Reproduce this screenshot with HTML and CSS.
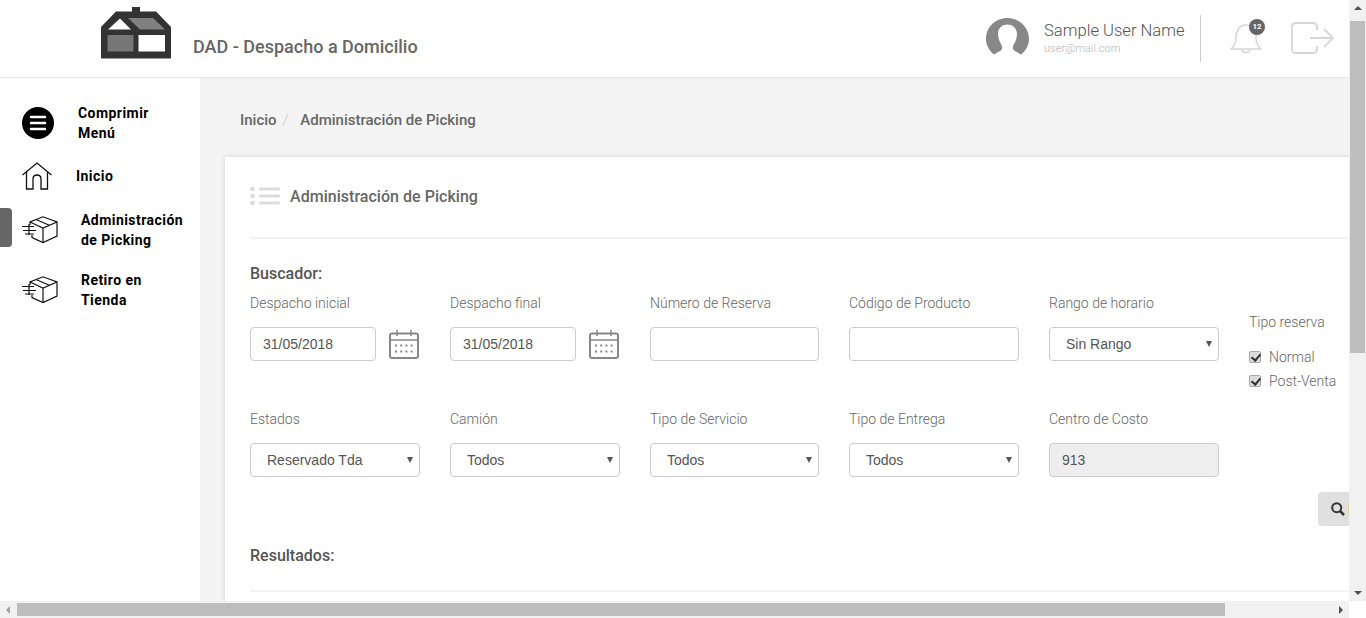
FILE: index.html
```html
<!DOCTYPE html>
<html lang="es">
<head>
    <meta charset="UTF-8">
    <meta name="viewport" content="width=device-width, initial-scale=1.0">
    <title>DAD - Despacho a Domicilio</title>
    <link rel="stylesheet" href="styles.css">
</head>
<body>
    <div class="window">
        <div class="viewport">
            <header class="topbar">
                <div class="brand">
                    <svg class="brand-logo" width="70" height="52" viewBox="0 0 70 52">
                        <path fill="#333" d="M0 20 15 4.500H31V0H39V4.500H55L70 20V51.500H0Z"/>
                        <path fill="#fff" d="M7 22.500 19 11.500 30 22.500Z"/>
                        <path fill="#808080" d="M27 11H52L64 22.500H39Z"/>
                        <rect fill="#777" x="6.500" y="28" width="26" height="16.500"/>
                        <rect fill="#fff" x="37.500" y="28" width="26.500" height="16.500"/>
                    </svg>
                    <span class="brand-name">DAD - Despacho a Domicilio</span>
                </div>
                <div class="user">
                    <svg class="avatar" width="43" height="38" viewBox="0 0 43 38">
                        <path fill="#888" d="M8 36.500C3 32.500 0 27 0 21 0 9 9.500 0 21.500 0S43 9.500 43 21C43 27 40 32.500 35 36.500 32 34.500 28 33 27 31 26.500 29 27 28 28 26 30 23 31 19 31 15 30 9.500 26.500 6.500 21.500 6.500S12.500 9.500 12 15C12 19 13 23 15 26 16 28 16.500 29 16 31 15 33 11 34.500 8 36.500Z"/>
                    </svg>
                    <div class="user-info">
                        <div class="user-name">Sample User Name</div>
                        <div class="user-mail">user@mail.com</div>
                    </div>
                    <div class="user-sep"></div>
                    <div class="bell">
                        <svg width="32" height="32" viewBox="0 0 32 32" fill="none" stroke="#d6d6d6" stroke-width="1.500">
                            <path d="M1 27C5 24 6 21 6 15 6 8 10 3 16 3S26 8 26 15C26 21 27 24 31 27Z" stroke-linejoin="round"/>
                            <path d="M11.500 27.500A4.800 4.800 0 0 0 20.500 27.500"/>
                        </svg>
                        <span class="badge">12</span>
                    </div>
                    <svg class="logout" width="43" height="32" viewBox="0 0 43 32" fill="none" stroke="#d6d6d6" stroke-width="1.800">
                        <path d="M26 8V5Q26 1 22 1H5Q1 1 1 5V27Q1 31 5 31H22Q26 31 26 27V24"/>
                        <path d="M19 16H42M33 7 42 16 33 25"/>
                    </svg>
                </div>
            </header>
            <div class="layout">
                <nav class="sidebar">
                    <a class="nav-item nav-toggle">
                        <svg class="nav-icon" width="32" height="32" viewBox="0 0 32 32">
                            <circle cx="16" cy="16" r="16" fill="#000"/>
                            <path stroke="#fff" stroke-width="2.500" stroke-linecap="round" d="M9 10H23M9 16H23M9 22H23"/>
                        </svg>
                        <span>Comprimir<br>Menú</span>
                    </a>
                    <a class="nav-item nav-home">
                        <svg class="nav-icon" width="30" height="28" viewBox="0 0 30 28" fill="none" stroke="#111" stroke-width="1.300">
                            <path d="M.5 13 15 1 29.500 13"/>
                            <path d="M4.500 10V27H11V17Q11 13 15 13T19 17V27H25.500V10"/>
                        </svg>
                        <span>Inicio</span>
                    </a>
                    <a class="nav-item nav-box active">
                        <svg class="nav-icon" width="36" height="28" viewBox="0 0 36 28" fill="none" stroke="#111" stroke-width="1.200">
                            <path d="M8 9V6L21 .8 35 6V20L21 26.500 10 21.500V19"/>
                            <path d="M8 6 21 12 35 6M21 12V26.500M14 3.500 28 9.500"/>
                            <path d="M0 10.500H12M1 14.500H14M3 18H12M7 8V19"/>
                        </svg>
                        <span>Administración<br>de Picking</span>
                    </a>
                    <a class="nav-item nav-box">
                        <svg class="nav-icon" width="36" height="28" viewBox="0 0 36 28" fill="none" stroke="#111" stroke-width="1.200">
                            <path d="M8 9V6L21 .8 35 6V20L21 26.500 10 21.500V19"/>
                            <path d="M8 6 21 12 35 6M21 12V26.500M14 3.500 28 9.500"/>
                            <path d="M0 10.500H12M1 14.500H14M3 18H12M7 8V19"/>
                        </svg>
                        <span>Retiro en<br>Tienda</span>
                    </a>
                </nav>
                <main class="content">
                    <div class="breadcrumb">
                        <span>Inicio</span><span class="crumb-sep">/</span><span>Administración de Picking</span>
                    </div>
                    <section class="card">
                        <div class="card-title">
                            <svg width="30" height="20" viewBox="0 0 30 20" fill="#dcdcdc">
                                <circle cx="2.500" cy="3" r="2.300"/>
                                <circle cx="2.500" cy="10" r="2.300"/>
                                <circle cx="2.500" cy="17" r="2.300"/>
                                <rect x="9" y="1.500" width="21" height="3" rx="1.500"/>
                                <rect x="9" y="8.500" width="21" height="3" rx="1.500"/>
                                <rect x="9" y="15.500" width="21" height="3" rx="1.500"/>
                            </svg>
                            <span>Administración de Picking</span>
                        </div>
                        <h3 class="section-head">Buscador:</h3>
                        <form class="filters">
                            <div class="field">
                                <label>Despacho inicial</label>
                                <div class="date-row">
                                    <input class="control control-date" type="text" value="31/05/2018">
                                    <svg class="cal" width="30" height="29" viewBox="0 0 30 29" fill="none" stroke="#888" stroke-width="2">
                                        <rect x="1" y="3.500" width="28" height="24.500" rx="2"/>
                                        <path d="M1 10H29M8 0V6M22 0V6" stroke-width="1.500"/>
                                        <path stroke-width="2" stroke-dasharray="2 3.200" d="M6 15.500H26M6 21.500H26"/>
                                    </svg>
                                </div>
                            </div>
                            <div class="field">
                                <label>Despacho final</label>
                                <div class="date-row">
                                    <input class="control control-date" type="text" value="31/05/2018">
                                    <svg class="cal" width="30" height="29" viewBox="0 0 30 29" fill="none" stroke="#888" stroke-width="2">
                                        <rect x="1" y="3.500" width="28" height="24.500" rx="2"/>
                                        <path d="M1 10H29M8 0V6M22 0V6" stroke-width="1.500"/>
                                        <path stroke-width="2" stroke-dasharray="2 3.200" d="M6 15.500H26M6 21.500H26"/>
                                    </svg>
                                </div>
                            </div>
                            <div class="field">
                                <label>Número de Reserva</label>
                                <input class="control control-narrow" type="text">
                            </div>
                            <div class="field">
                                <label>Código de Producto</label>
                                <input class="control" type="text">
                            </div>
                            <div class="field">
                                <label>Rango de horario</label>
                                <div class="control control-select">Sin Rango</div>
                            </div>
                            <div class="field field-checks">
                                <label>Tipo reserva</label>
                                <div class="check"><input type="checkbox" checked><span>Normal</span></div>
                                <div class="check"><input type="checkbox" checked><span>Post-Venta</span></div>
                            </div>
                            <div class="field">
                                <label>Estados</label>
                                <div class="control control-select">Reservado Tda</div>
                            </div>
                            <div class="field">
                                <label>Camión</label>
                                <div class="control control-select">Todos</div>
                            </div>
                            <div class="field">
                                <label>Tipo de Servicio</label>
                                <div class="control control-select control-narrow">Todos</div>
                            </div>
                            <div class="field">
                                <label>Tipo de Entrega</label>
                                <div class="control control-select">Todos</div>
                            </div>
                            <div class="field">
                                <label>Centro de Costo</label>
                                <input class="control control-disabled" type="text" value="913" disabled>
                            </div>
                        </form>
                        <div class="actions">
                            <button class="search-btn" type="button">
                                <svg width="14" height="14" viewBox="0 0 14 14" fill="none" stroke="#333" stroke-width="2">
                                    <circle cx="5.700" cy="5.700" r="4.500"/>
                                    <path stroke-width="2.500" d="M9 9 13 13"/>
                                </svg>
                                <span>Buscar</span>
                            </button>
                        </div>
                        <h3 class="section-head section-results">Resultados:</h3>
                    </section>
                </main>
            </div>
        </div>
        <div class="vscroll">
            <span class="arrow arrow-up"></span>
            <div class="vthumb"></div>
            <span class="arrow arrow-down"></span>
        </div>
        <div class="hscroll">
            <span class="arrow arrow-left"></span>
            <div class="htrack"><div class="hthumb"></div></div>
            <span class="arrow arrow-right"></span>
        </div>
        <div class="corner"></div>
    </div>
</body>
</html>
```

FILE: styles.css
```css
* {
    box-sizing: border-box;
}

html, body {
    margin: 0;
    padding: 0;
    height: 100%;
    overflow: hidden;
}

body {
    font-family: 'Roboto', sans-serif;
    background-color: #fff;
    color: #666;
}

.window {
    display: grid;
    grid-template-columns: 1349px 17px;
    grid-template-rows: 601px 17px;
    height: 618px;
}

.viewport {
    overflow: hidden;
    display: flex;
    flex-direction: column;
}

/* barra superior */
.topbar {
    flex: none;
    height: 78px;
    background: #fff;
    border-bottom: 1px solid #e7e7e7;
    display: flex;
    justify-content: space-between;
}

.brand {
    display: flex;
    padding: 7px 0 0 101px;
    align-items: flex-start;
}

.brand-name {
    margin: 29px 0 0 22px;
    font-size: 18px;
    line-height: 22px;
    font-weight: 500;
    color: #666;
}

.user {
    display: flex;
    align-items: flex-start;
    padding-right: 15px;
}

.avatar {
    margin-top: 18px;
}

.user-info {
    margin: 20px 0 0 15px;
    width: 156px;
}

.user-name {
    font-size: 16.600px;
    line-height: 21px;
    font-weight: 300;
    color: #555;
}

.user-mail {
    font-size: 11px;
    line-height: 14px;
    margin-top: 1px;
    font-weight: 300;
    color: #b5b5b5;
    letter-spacing: .05px;
}

.user-sep {
    width: 1px;
    height: 47px;
    margin-top: 15px;
    background: #ccc;
}

.bell {
    position: relative;
    margin: 22px 0 0 29px;
    width: 32px;
}

.badge {
    position: absolute;
    top: -3px;
    left: 19px;
    width: 16px;
    height: 16px;
    border-radius: 50%;
    background: #666;
    color: #fff;
    font-size: 8px;
    font-weight: 700;
    line-height: 16px;
    text-align: center;
}

.logout {
    margin: 22px 0 0 29px;
}

.layout {
    flex: 1;
    display: flex;
    min-height: 0;
}

/* menu lateral */
.sidebar {
    flex: none;
    width: 200px;
    background: #fff;
    padding-top: 25px;
}

.nav-item {
    position: relative;
    display: flex;
    align-items: center;
    padding-left: 22px;
    color: #000;
    font-size: 14px;
    line-height: 20px;
    font-weight: 700;
    letter-spacing: .45px;
}

.nav-toggle {
    height: 40px;
    margin-bottom: 13px;
}

.nav-toggle span {
    margin-left: 24px;
}

.nav-home {
    height: 40px;
    margin-bottom: 14px;
}

.nav-home span {
    margin-left: 24px;
}

.nav-box {
    height: 40px;
    margin-bottom: 20px;
}

.nav-box span {
    margin-left: 23px;
}

.active::before {
    content: "";
    position: absolute;
    left: 0;
    top: -2px;
    width: 12px;
    height: 39px;
    background: #666;
    border-radius: 0 4px 4px 0;
}

/* contenido */
.content {
    flex: 1;
    min-width: 0;
    background: #f4f4f4;
    padding: 0 0 0 25px;
    overflow: hidden;
}

.breadcrumb {
    padding: 32px 0 0 15px;
    height: 79px;
    font-size: 15px;
    line-height: 20px;
    font-weight: 500;
    color: #666;
}

.crumb-sep {
    margin: 0 11.700px 0 6px;
    font-weight: 300;
    color: #ccc;
}

.card {
    width: 1225px;
    min-height: 600px;
    background: #fff;
    padding: 0 25px;
    box-shadow: 0 0 5px rgba(0, 0, 0, 0.15);
}

.card-title {
    height: 82px;
    border-bottom: 2px solid #f3f3f3;
    display: flex;
    align-items: center;
    padding-bottom: 2px;
    font-size: 16px;
    font-weight: 500;
    color: #666;
    letter-spacing: .03px;
}

.card-title span {
    margin-left: 10px;
}

.section-head {
    margin: 0;
    font-size: 16px;
    line-height: 20px;
    font-weight: 500;
    color: #555;
}

.card-title + .section-head {
    margin-top: 25px;
}

.filters {
    display: grid;
    grid-template-columns: 200px 200px 199px 200px 200px 1fr;
    grid-template-rows: 116px 83px;
    margin-top: 9px;
}

.field {
    min-width: 0;
}

.field label {
    display: block;
    font-size: 14px;
    line-height: 20px;
    height: 34px;
    font-weight: 300;
    color: #666;
}

.field-checks {
    grid-column: 6;
    grid-row: 1 / span 2;
    padding-top: 19px;
}

.field-checks label {
    height: 33px;
}

.check {
    display: flex;
    align-items: center;
    height: 24px;
    font-size: 14px;
    font-weight: 300;
    color: #666;
}

.check input {
    appearance: none;
    position: relative;
    width: 12px;
    height: 12px;
    margin: 0 8px 0 0;
    background: #dcdcdc;
    border: 1px solid #aaa;
    border-radius: 2px;
}

.check input::after {
    content: "";
    position: absolute;
    left: 3px;
    top: 0;
    width: 4px;
    height: 7px;
    border: solid #333;
    border-width: 0 2px 2px 0;
    transform: rotate(40deg);
}

.control {
    display: block;
    width: 170px;
    height: 34px;
    padding: 0 12px;
    background: #fff;
    border: 1px solid #ccc;
    border-radius: 4px;
    font-family: 'Liberation Sans', sans-serif;
    font-size: 14px;
    color: #555;
    line-height: 32px;
}

.control-date {
    width: 126px;
}

.control-narrow {
    width: 169px;
}

.control-select {
    position: relative;
    padding-left: 16px;
}

.control-select::after {
    content: "";
    position: absolute;
    right: 6px;
    top: 13px;
    border-left: 3.500px solid transparent;
    border-right: 3.500px solid transparent;
    border-top: 6px solid #555;
}

.control-disabled {
    background: #eee;
}

.date-row {
    display: flex;
    align-items: center;
}

.cal {
    margin: 1px 0 0 13px;
}

.actions {
    display: flex;
    justify-content: flex-end;
}

.search-btn {
    display: flex;
    align-items: center;
    gap: 3px;
    width: 107px;
    height: 34px;
    padding: 0 0 0 13px;
    border: none;
    border-radius: 4px;
    background: #e0e0e0;
    font-family: 'Roboto', sans-serif;
    font-size: 14px;
    font-weight: 700;
    color: #f0ad4e;
}

.section-results {
    margin-top: 20px;
    padding-bottom: 24px;
    border-bottom: 2px solid #f3f3f3;
}

/* barras de desplazamiento */
.vscroll {
    background: #f1f1f1;
    display: flex;
    flex-direction: column;
    align-items: center;
}

.vthumb {
    width: 15px;
    height: 332px;
    margin-top: 5px;
    background: #bdbdbd;
}

.hscroll {
    background: #f1f1f1;
    display: flex;
    align-items: center;
}

.htrack {
    flex: 1;
}

.hthumb {
    width: 1208px;
    height: 13px;
    background: #bdbdbd;
}

.corner {
    background: #fff;
}

.arrow {
    flex: none;
    display: block;
    width: 0;
    height: 0;
    border-style: solid;
    border-color: transparent;
}

.arrow-up {
    margin-top: 6px;
    margin-bottom: 6px;
    border-width: 0 4px 4px;
    border-bottom-color: #505050;
}

.arrow-down {
    margin-top: auto;
    margin-bottom: 6px;
    border-width: 4px 4px 0;
    border-top-color: #505050;
}

.arrow-left {
    margin: 0 7px 0 6px;
    border-width: 4px 4px 4px 0;
    border-right-color: #a0a0a0;
}

.arrow-right {
    margin: 0 6px 0 7px;
    border-width: 4px 0 4px 4px;
    border-left-color: #505050;
}
```
